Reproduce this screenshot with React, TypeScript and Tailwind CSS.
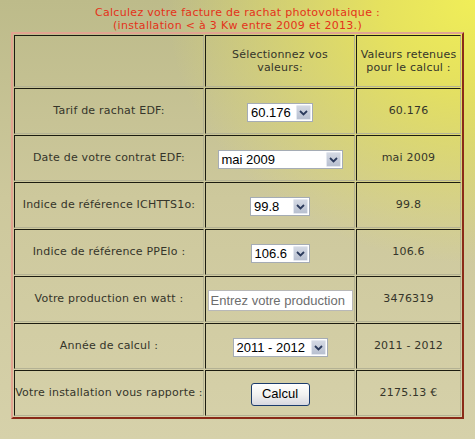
import React from 'react';

const cellText = "font-['DejaVu_Sans',Verdana,sans-serif] text-[11px] tracking-[0.2px] text-[#35352a]";

function Chevron() {
  return (
    <svg width="9" height="6" viewBox="0 0 9 6">
      <path d="M1 1 L4.5 4.5 L8 1" fill="none" stroke="#2b3a5c" strokeWidth="1.8" />
    </svg>
  );
}

function FakeSelect({ value, width }: { value: string; width: number }) {
  return (
    <div
      className="inline-flex h-[19px] items-stretch border border-[#a5acb5] bg-white align-middle"
      style={{ width }}
    >
      <span className="flex flex-1 items-center pl-[3px] font-['Liberation_Sans',Arial,sans-serif] text-[13px] leading-none text-black">
        {value}
      </span>
      <span className="m-[1px] flex w-[15px] items-center justify-center rounded-[1px] border border-[#e4e8f0] bg-gradient-to-b from-[#d4d9e4] to-[#b8c0d0]">
        <Chevron />
      </span>
    </div>
  );
}

const cell = 'border border-t-[#1c1c10] border-l-[#1c1c10] border-r-[#b4b294] border-b-[#b4b294] text-center align-middle';

export default function App() {
  const rows: { label: string; control: React.ReactNode; value: string }[] = [
    { label: 'Tarif de rachat EDF:', control: <FakeSelect value="60.176" width={66} />, value: '60.176' },
    { label: 'Date de votre contrat EDF:', control: <FakeSelect value="mai 2009" width={125} />, value: 'mai 2009' },
    { label: 'Indice de référence ICHTTS1o:', control: <FakeSelect value="99.8" width={60} />, value: '99.8' },
    { label: 'Indice de référence PPEIo :', control: <FakeSelect value="106.6" width={59} />, value: '106.6' },
    {
      label: 'Votre production en watt :',
      control: (
        <input
          readOnly
          placeholder="Entrez votre production"
          className="h-[21px] w-[145px] border border-[#b8b8b8] bg-white px-[2px] font-['Liberation_Sans',Arial,sans-serif] text-[13px] text-black outline-none placeholder:text-[#6d6d6d]"
        />
      ),
      value: '3476319',
    },
    { label: 'Année de calcul :', control: <FakeSelect value="2011 - 2012" width={95} />, value: '2011 - 2012' },
    {
      label: 'Votre installation vous rapporte :',
      control: (
        <button className="h-[23px] w-[59px] rounded-[3px] border border-[#1c3c6c] bg-gradient-to-b from-white via-[#f2f2f0] to-[#d8d8e0] font-['Liberation_Sans',Arial,sans-serif] text-[13px] text-black">
          Calcul
        </button>
      ),
      value: '2175.13 €',
    },
  ];

  return (
    <div className="h-[439px] w-[475px] overflow-hidden [background:radial-gradient(ellipse_65%_60%_at_100%_0%,#f0ee58_0%,#e6e25e_30%,rgba(226,222,110,0)_100%),linear-gradient(180deg,#bdbb8a_0%,#cdc89c_45%,#d6d1aa_100%)]">
      <div className="pt-[6px] text-center font-['DejaVu_Sans',Verdana,sans-serif] text-[11px] leading-[13px] tracking-[0.3px] text-[#e4321a]">
        <div>Calculez votre facture de rachat photovoltaique :</div>
        <div>(installation &lt; à 3 Kw entre 2009 et 2013.)</div>
      </div>
      <table className="ml-[11px] w-[453px] table-fixed border-separate border-spacing-x-[1px] border-spacing-y-[1.5px] border-2 border-t-[#e2a491] border-l-[#e2a491] border-r-[#8a2a18] border-b-[#8a2a18]">
        <colgroup>
          <col className="w-[190px]" />
          <col className="w-[150px]" />
          <col className="w-[105px]" />
        </colgroup>
        <tbody>
          <tr>
            <td className={`${cell} h-[52px]`}></td>
            <td className={`${cell} ${cellText} leading-[13px]`}>
              Sélectionnez vos
              <br />
              valeurs:
            </td>
            <td className={`${cell} ${cellText} whitespace-nowrap leading-[13px]`}>
              Valeurs retenues
              <br />
              pour le calcul :
            </td>
          </tr>
          {rows.map((r) => (
            <tr key={r.label}>
              <td className={`${cell} ${cellText} h-[46px] whitespace-nowrap`}>{r.label}</td>
              <td className={`${cell}`}>{r.control}</td>
              <td className={`${cell} ${cellText}`}>{r.value}</td>
            </tr>
          ))}
        </tbody>
      </table>
    </div>
  );
}
